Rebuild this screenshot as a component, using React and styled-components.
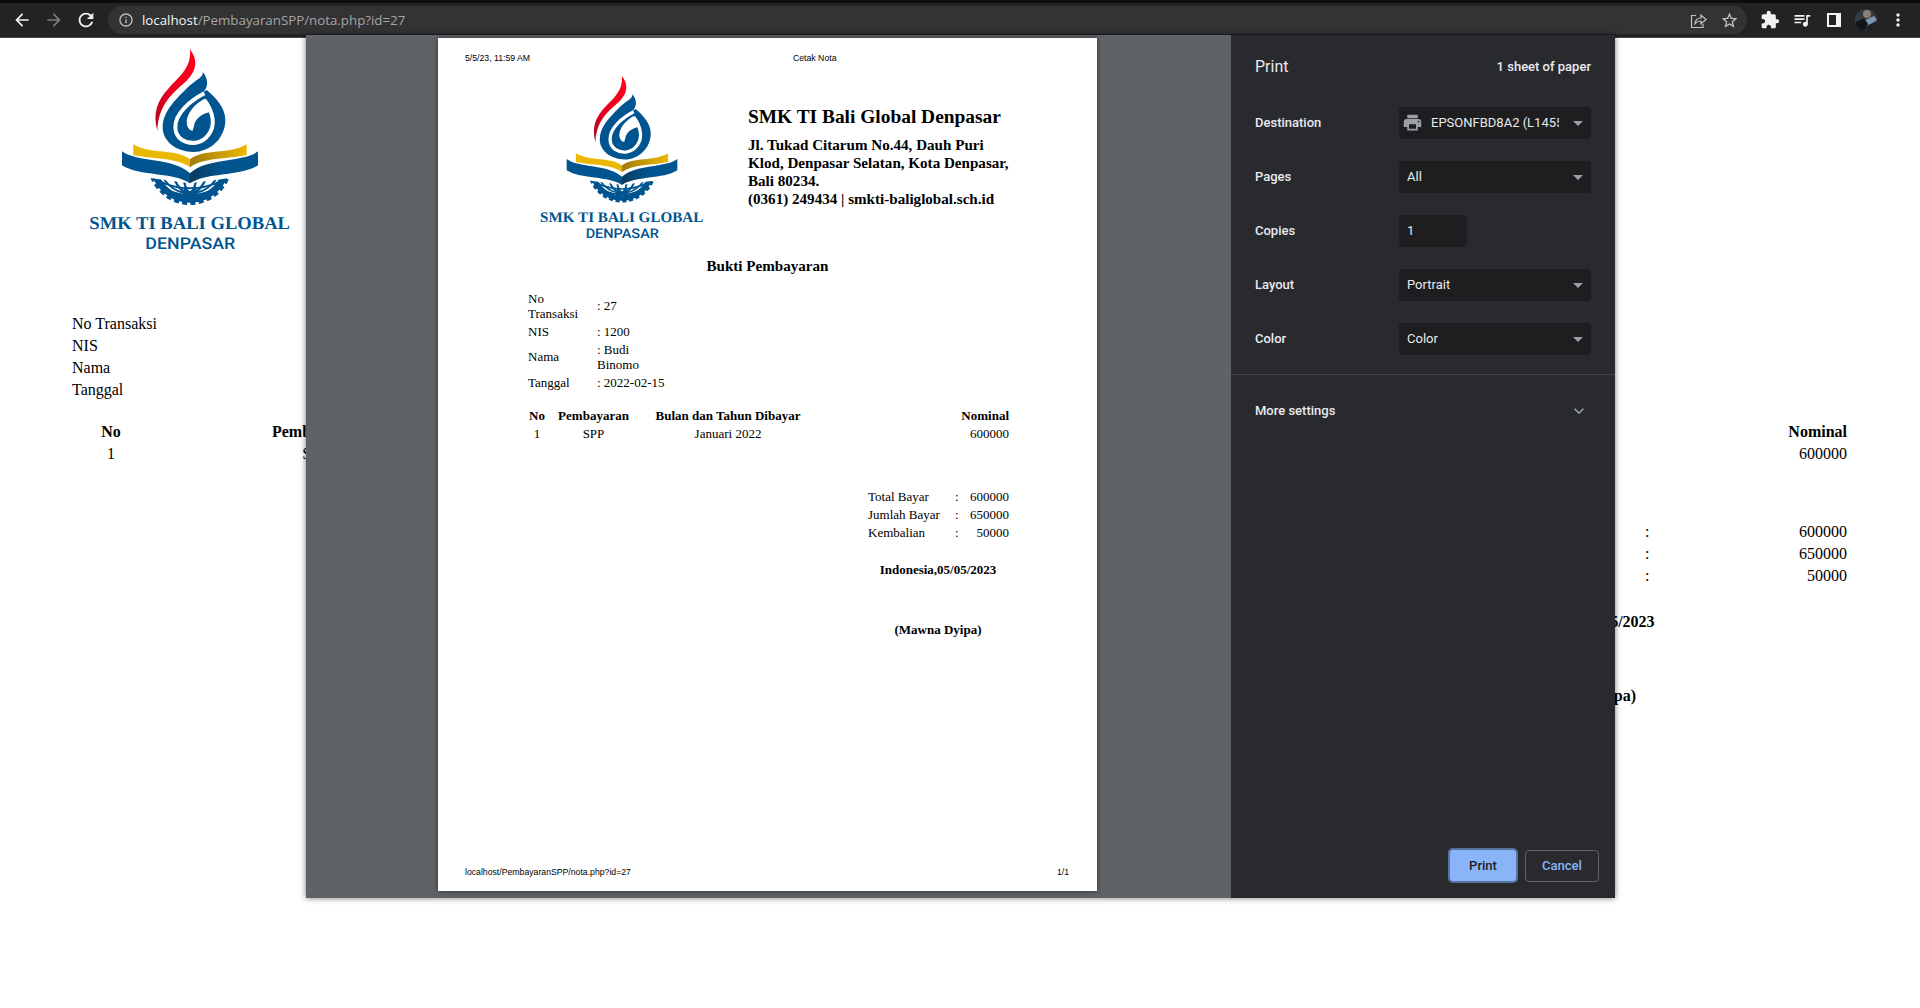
import styled, { createGlobalStyle } from 'styled-components';
import { MdArrowBack, MdArrowForward, MdRefresh, MdInfoOutline, MdStarBorder, MdExtension, MdQueueMusic, MdMoreVert, MdPrint, MdArrowDropDown, MdExpandMore } from 'react-icons/md';

const Global = createGlobalStyle`
    html, body { margin: 0; padding: 0; background: #fff; }
    * { box-sizing: border-box; }
`

const Root = styled.div`
    position: relative;
    height: 1008px;
    overflow: hidden;
    background: #fff;
    font-family: "Liberation Serif", serif;
    color: #000;
`

/* chrome toolbar */
const Toolbar = styled.div`
    display: flex;
    align-items: center;
    height: 38px;
    padding: 0 6px;
    background: #232323;
    border-top: 3px solid #0c0c0c;
    border-bottom: 1px solid #444;
`
const ToolIcon = styled.div`
    display: flex;
    align-items: center;
    justify-content: center;
    flex: 0 0 32px;
    height: 32px;
    color: ${p => p.$dim ? '#7d7d7d' : '#f1f1f1'};
    font-size: ${p => p.$size || 20}px;
`
const Omnibox = styled.div`
    display: flex;
    align-items: center;
    flex: 1;
    height: 28px;
    margin: 0 7px 0 6px;
    padding: 0 2px 0 10px;
    border-radius: 14px;
    background: #333334;
    color: #bdbdbd;
    font-family: "Open Sans", sans-serif;
    font-size: 13.3px;
`
const Url = styled.div`
    flex: 1;
    margin-left: 8px;
    color: #a5a5a5;
    white-space: nowrap;
    b { font-weight: 400; color: #f4f4f4; }
`
const OmniIcon = styled.div`
    display: flex;
    align-items: center;
    justify-content: center;
    flex: 0 0 31px;
    color: #c4c4c4;
    font-size: 19px;
`

/* page behind the dialog */
const BehindPage = styled.div`
    padding: 9px 73px 0 72px;
    font-size: 16px;
`
const BehindLogo = styled.div`
    margin-left: 16px;
    height: 206px;
`
const Info = styled.div`
    display: grid;
    grid-template-columns: ${p => p.$cols};
    justify-content: start;
    row-gap: ${p => p.$gap || 0}px;
    margin-top: ${p => p.$top}px;
    line-height: ${p => p.$line}px;
    align-items: center;
`
const NotaTable = styled.div`
    display: grid;
    grid-template-columns: ${p => p.$cols};
    grid-auto-rows: ${p => p.$row}px;
    margin-top: ${p => p.$top}px;
    align-items: center;
`
const Th = styled.div`
    font-weight: 700;
    text-align: ${p => p.$right ? 'right' : 'center'};
    white-space: nowrap;
`
const Td = styled.div`
    text-align: ${p => p.$right ? 'right' : 'center'};
    white-space: nowrap;
`
const Totals = styled.div`
    display: grid;
    grid-template-columns: ${p => p.$cols};
    grid-auto-rows: ${p => p.$row}px;
    justify-content: end;
    margin-top: ${p => p.$top}px;
    align-items: center;
    white-space: nowrap;
`
const Sign = styled.div`
    font-weight: 700;
    text-align: center;
    white-space: nowrap;
    width: ${p => p.$width}px;
    margin: ${p => p.$top}px 0 0 auto;
    margin-right: ${p => p.$right}px;
    line-height: ${p => p.$line}px;
`

/* print dialog */
const Dialog = styled.div`
    position: absolute;
    left: 306px;
    top: 35px;
    width: 1309px;
    height: 863px;
    display: grid;
    grid-template-columns: 925px 384px;
    box-shadow: 0 0 6px rgba(0,0,0,0.55);
`
const Preview = styled.div`
    background: #5f6368;
    padding: 3px 0 0 132px;
`
const Paper = styled.div`
    display: flex;
    flex-direction: column;
    width: 659px;
    height: 853px;
    background: #fff;
    box-shadow: 0 0 5px rgba(0,0,0,0.5);
    font-size: 13px;
`
const PrintHead = styled.div`
    display: grid;
    grid-template-columns: 328px 1fr;
    padding: 15px 27px 0;
    font-family: "Liberation Sans", sans-serif;
    font-size: 8.7px;
    line-height: 11px;
`
const PrintFoot = styled.div`
    display: flex;
    justify-content: space-between;
    margin-top: auto;
    padding: 0 28px 13px 27px;
    font-family: "Liberation Sans", sans-serif;
    font-size: 8.7px;
    line-height: 11px;
`
const Letterhead = styled.div`
    display: flex;
    gap: 43px;
    margin-top: 10px;
    padding-left: 101px;
`
const School = styled.div`
    margin-top: 32px;
    width: 270px;
`
const SchoolName = styled.div`
    font-size: 19.4px;
    font-weight: 700;
    line-height: 22px;
    white-space: nowrap;
`
const Address = styled.div`
    margin-top: 8px;
    font-size: 15.1px;
    font-weight: 700;
    line-height: 18px;
`
const Title = styled.div`
    margin-top: 15px;
    font-size: 15.1px;
    font-weight: 700;
    line-height: 18px;
    text-align: center;
`
const PaperBody = styled.div`
    padding: 0 88px 0 90px;
`

const Side = styled.div`
    display: flex;
    flex-direction: column;
    background: #292a2d;
    color: #e8eaed;
    font-family: Roboto, sans-serif;
    font-size: 13px;
    font-weight: 500;
`
const SideHead = styled.div`
    display: flex;
    align-items: center;
    justify-content: space-between;
    height: 62px;
    margin-bottom: 10px;
    padding: 0 24px;
`
const SideTitle = styled.div`
    font-size: 16px;
    font-weight: 400;
`
const SettingRow = styled.div`
    display: grid;
    grid-template-columns: 144px 192px;
    align-items: center;
    height: 32px;
    margin: 0 24px 22px;
    padding-bottom: 1px;
`
const Select = styled.div`
    display: flex;
    align-items: center;
    width: ${p => p.$width || '192px'};
    height: 32px;
    margin-bottom: -1px;
    padding: 0 8px 1px;
    border-radius: 4px;
    background: #1e1e20;
    font-weight: 400;
    color: #e8eaed;
`
const SelectText = styled.div`
    width: ${p => p.$width || 'auto'};
    overflow: hidden;
    white-space: nowrap;
`
const Caret = styled.div`
    display: flex;
    margin-left: auto;
    margin-right: -7px;
    color: #9aa0a6;
    font-size: 24px;
`
const PrinterIcon = styled.div`
    display: flex;
    margin: 0 8px 0 -5px;
    color: #9aa0a6;
    font-size: 21px;
`
const Divider = styled.div`
    height: 1px;
    margin-top: -3px;
    background: #3f4043;
`
const MoreRow = styled.div`
    display: flex;
    align-items: center;
    justify-content: space-between;
    height: 72px;
    padding: 0 26px 1px 24px;
    color: #e8eaed;
    svg { color: #9aa0a6; font-size: 20px; }
`
const SideFoot = styled.div`
    display: flex;
    align-items: center;
    justify-content: flex-end;
    gap: 7px;
    margin-top: auto;
    padding: 0 16px 15px;
`
const PrintButton = styled.button`
    width: 70px;
    height: 35px;
    border: 2px solid #58739f;
    border-radius: 5px;
    background: #8ab4f8;
    color: #202124;
    font: 500 13px Roboto, sans-serif;
`
const CancelButton = styled.button`
    width: 74px;
    height: 32px;
    border: 1px solid #5f6368;
    border-radius: 4px;
    background: transparent;
    color: #8ab4f8;
    font: 500 13px Roboto, sans-serif;
`
const LogoSvg = styled.svg`
    display: block;
    width: ${p => p.$width}px;
    flex: none;
    overflow: visible;
    text { text-rendering: geometricPrecision; }
`

function Logo({ width }) {
    return (
        <LogoSvg $width={width} viewBox="84 21 612 618">
            <defs>
                <linearGradient id="redFlame" x1="0" y1="1" x2="0.6" y2="0">
                    <stop offset="0" stopColor="#a80a22" />
                    <stop offset="0.5" stopColor="#e8001f" />
                    <stop offset="1" stopColor="#ff0018" />
                </linearGradient>
                <linearGradient id="goldRight" x1="0" y1="0" x2="1" y2="0">
                    <stop offset="0" stopColor="#a07c10" />
                    <stop offset="1" stopColor="#ecb800" />
                </linearGradient>
                <linearGradient id="blueRight" x1="0" y1="0" x2="1" y2="0">
                    <stop offset="0" stopColor="#0b3a5e" />
                    <stop offset="0.45" stopColor="#00548f" />
                </linearGradient>
                <clipPath id="globeClip">
                    <path d="M 240 410 L 390 430 L 540 410 L 540 500 L 240 500 Z" />
                </clipPath>
            </defs>
            <path fill="url(#redFlame)" d="M390 28 C412 58 414 88 380 122 C340 158 296 190 292 272 C278 220 290 182 330 140 C366 104 394 78 390 28 Z" />
            {/* spiral flame: solid drop with the white spiral cut over it */}
            <path fill="#00548f" d="M428 95 C446 118 446 140 428 158 L440 150 C470 175 496 205 496 240 C496 295 450 336 400 336 C350 336 308 305 308 262 C308 215 345 180 385 140 C410 118 432 110 428 95 Z" />
            <path fill="none" stroke="#fff" strokeWidth="12" d="M433 160 C395 180 345 218 346 262 C347 295 375 312 408 308 C440 303 462 270 458 238 C455 215 445 195 433 180" />
            <path fill="#fff" d="M433 176 C405 192 380 218 380 248 C381 262 388 270 398 272 L402 258 C404 238 425 220 452 216 C450 200 442 186 433 176 Z" />
            {/* book */}
            <path fill="#eab800" d="M220 313 C270 344 350 326 390 358 L390 382 C350 352 280 358 220 345 Z" />
            <path fill="url(#goldRight)" d="M560 313 C510 344 430 326 390 358 L390 382 C430 352 500 358 560 345 Z" />
            <path fill="#00548f" d="M186 334 C230 368 340 352 390 400 L390 430 C340 396 240 410 186 376 Z" />
            <path fill="url(#blueRight)" d="M594 334 C550 368 440 352 390 400 L390 430 C440 396 540 410 594 376 Z" />
            {/* gear and globe */}
            <g clipPath="url(#globeClip)" fill="none" stroke="#00548f">
                <circle cx="390" cy="368" r="110" strokeWidth="20" />
                <circle cx="390" cy="368" r="122" strokeWidth="10" strokeDasharray="15 10" />
                <circle cx="390" cy="368" r="92" strokeWidth="6" />
                <ellipse cx="390" cy="368" rx="55" ry="92" strokeWidth="7" />
                <ellipse cx="390" cy="368" rx="22" ry="92" strokeWidth="7" />
                <path strokeWidth="6" d="M300 425 Q390 465 480 425 M325 452 Q390 478 455 452" />
            </g>
            <path fill="#00548f" d="M372 440 L390 454 L408 440 L412 468 L368 468 Z" />
            <text x="88" y="566" fontFamily="Liberation Serif, serif" fontWeight="700" fontSize="54" fill="#00548f" textLength="602" lengthAdjust="spacingAndGlyphs">SMK TI BALI GLOBAL</text>
            <text x="256" y="627" fontFamily="Roboto, sans-serif" fontWeight="500" fontSize="49" fill="#00548f" textLength="270" lengthAdjust="spacingAndGlyphs">DENPASAR</text>
        </LogoSvg>
    )
}

function ShareIcon() {
    return (
        <svg width="17" height="17" viewBox="0 0 17 17" fill="none" stroke="currentColor" strokeWidth="1.2">
            <path d="M6 3.5 H1.5 V15.5 H13 V12" />
            <path d="M5 11.5 C5.5 8 8 6 11 6 V3 L16 7.5 L11 12 V9 C8.5 9 6.5 9.8 5 11.5 Z" />
        </svg>
    )
}

function PanelIcon() {
    return (
        <svg width="14" height="14" viewBox="0 0 14 14">
            <path fillRule="evenodd" fill="#f4f4f4" d="M0 0 H14 V14 H0 Z M2 2 V12 H9 V2 Z" />
        </svg>
    )
}

function Avatar() {
    return (
        <svg width="22" height="22" viewBox="0 0 22 22">
            <defs>
                <clipPath id="avatarClip"><circle cx="11" cy="11" r="11" /></clipPath>
            </defs>
            <g clipPath="url(#avatarClip)">
                <rect width="22" height="22" fill="#333a42" />
                <circle cx="12" cy="5" r="4" fill="#8d7f78" />
                <path d="M8 12 L19 7 L22 11 L11 18 Z" fill="#8096b0" />
                <path d="M1 13 L9 9 L13 15 L9 23 L0 22 Z" fill="#12161b" />
                <path d="M13 16 L22 13 V22 H11 Z" fill="#1d2229" />
            </g>
        </svg>
    )
}

const settings = [
    { label: 'Pages', value: 'All' },
    { label: 'Copies', value: '1', width: '68px', noCaret: true },
    { label: 'Layout', value: 'Portrait' },
    { label: 'Color', value: 'Color' },
]

function App() {
    return (
        <Root>
            <Global />
            <Toolbar>
                <ToolIcon><MdArrowBack /></ToolIcon>
                <ToolIcon $dim><MdArrowForward /></ToolIcon>
                <ToolIcon $size={22}><MdRefresh /></ToolIcon>
                <Omnibox>
                    <MdInfoOutline size={16} />
                    <Url><b>localhost</b>/PembayaranSPP/nota.php?id=27</Url>
                    <OmniIcon><ShareIcon /></OmniIcon>
                    <OmniIcon><MdStarBorder /></OmniIcon>
                </Omnibox>
                <ToolIcon><MdExtension /></ToolIcon>
                <ToolIcon><MdQueueMusic /></ToolIcon>
                <ToolIcon><PanelIcon /></ToolIcon>
                <ToolIcon><Avatar /></ToolIcon>
                <ToolIcon><MdMoreVert /></ToolIcon>
            </Toolbar>

            <BehindPage>
                <BehindLogo><Logo width={204} /></BehindLogo>
                <Info $cols="300px auto" $top={60} $line={22}>
                    <div>No Transaksi</div><div>: 27</div>
                    <div>NIS</div><div>: 1200</div>
                    <div>Nama</div><div>: Budi Binomo</div>
                    <div>Tanggal</div><div>: 2022-02-15</div>
                </Info>
                <NotaTable $cols="78px 331px 1fr 200px" $row={22} $top={20}>
                    <Th>No</Th><Th>Pembayaran</Th><Th>Bulan dan Tahun Dibayar</Th><Th $right>Nominal</Th>
                    <Td>1</Td><Td>SPP</Td><Td>Januari 2022</Td><Td $right>600000</Td>
                </NotaTable>
                <Totals $cols="150px 20px 182px" $row={22} $top={56}>
                    <div>Total Bayar</div><div>:</div><Td $right>600000</Td>
                    <div>Jumlah Bayar</div><div>:</div><Td $right>650000</Td>
                    <div>Kembalian</div><div>:</div><Td $right>50000</Td>
                </Totals>
                <Sign $width={143} $top={24} $right={193} $line={22}>Indonesia,05/05/2023</Sign>
                <Sign $width={143} $top={52} $right={193} $line={22}>(Mawna Dyipa)</Sign>
            </BehindPage>

            <Dialog>
                <Preview>
                    <Paper>
                        <PrintHead>
                            <div>5/5/23, 11:59 AM</div>
                            <div>Cetak Nota</div>
                        </PrintHead>
                        <Letterhead>
                            <Logo width={166} />
                            <School>
                                <SchoolName>SMK TI Bali Global Denpasar</SchoolName>
                                <Address>
                                    Jl. Tukad Citarum No.44, Dauh Puri<br />
                                    Klod, Denpasar Selatan, Kota Denpasar,<br />
                                    Bali 80234.<br />
                                    (0361) 249434 | smkti-baliglobal.sch.id
                                </Address>
                            </School>
                        </Letterhead>
                        <Title>Bukti Pembayaran</Title>
                        <PaperBody>
                            <Info $cols="69px 70px" $top={16} $line={15} $gap={3}>
                                <div>No<br />Transaksi</div><div>: 27</div>
                                <div>NIS</div><div>: 1200</div>
                                <div>Nama</div><div>: Budi Binomo</div>
                                <div>Tanggal</div><div>: 2022-02-15</div>
                            </Info>
                            <NotaTable $cols="18px 95px 174px 1fr" $row={17.5} $top={18}>
                                <Th>No</Th><Th>Pembayaran</Th><Th>Bulan dan Tahun Dibayar</Th><Th $right>Nominal</Th>
                                <Td>1</Td><Td>SPP</Td><Td>Januari 2022</Td><Td $right>600000</Td>
                            </NotaTable>
                            <Totals $cols="87px 11px 43px" $row={18} $top={45}>
                                <div>Total Bayar</div><div>:</div><Td $right>600000</Td>
                                <div>Jumlah Bayar</div><div>:</div><Td $right>650000</Td>
                                <div>Kembalian</div><div>:</div><Td $right>50000</Td>
                            </Totals>
                            <Sign $width={142} $top={20} $right={0} $line={16}>Indonesia,05/05/2023</Sign>
                            <Sign $width={142} $top={44} $right={0} $line={16}>(Mawna Dyipa)</Sign>
                        </PaperBody>
                        <PrintFoot>
                            <div>localhost/PembayaranSPP/nota.php?id=27</div>
                            <div>1/1</div>
                        </PrintFoot>
                    </Paper>
                </Preview>
                <Side>
                    <SideHead>
                        <SideTitle>Print</SideTitle>
                        <div>1 sheet of paper</div>
                    </SideHead>
                    <SettingRow>
                        <div>Destination</div>
                        <Select>
                            <PrinterIcon><MdPrint /></PrinterIcon>
                            <SelectText $width="128px">EPSONFBD8A2 (L1455 Series)</SelectText>
                            <Caret><MdArrowDropDown /></Caret>
                        </Select>
                    </SettingRow>
                    {settings.map(s => (
                        <SettingRow key={s.label}>
                            <div>{s.label}</div>
                            <Select $width={s.width}>
                                <SelectText>{s.value}</SelectText>
                                {s.noCaret ? null : <Caret><MdArrowDropDown /></Caret>}
                            </Select>
                        </SettingRow>
                    ))}
                    <Divider />
                    <MoreRow>
                        <div>More settings</div>
                        <MdExpandMore />
                    </MoreRow>
                    <SideFoot>
                        <PrintButton>Print</PrintButton>
                        <CancelButton>Cancel</CancelButton>
                    </SideFoot>
                </Side>
            </Dialog>
        </Root>
    )
}

export default App
